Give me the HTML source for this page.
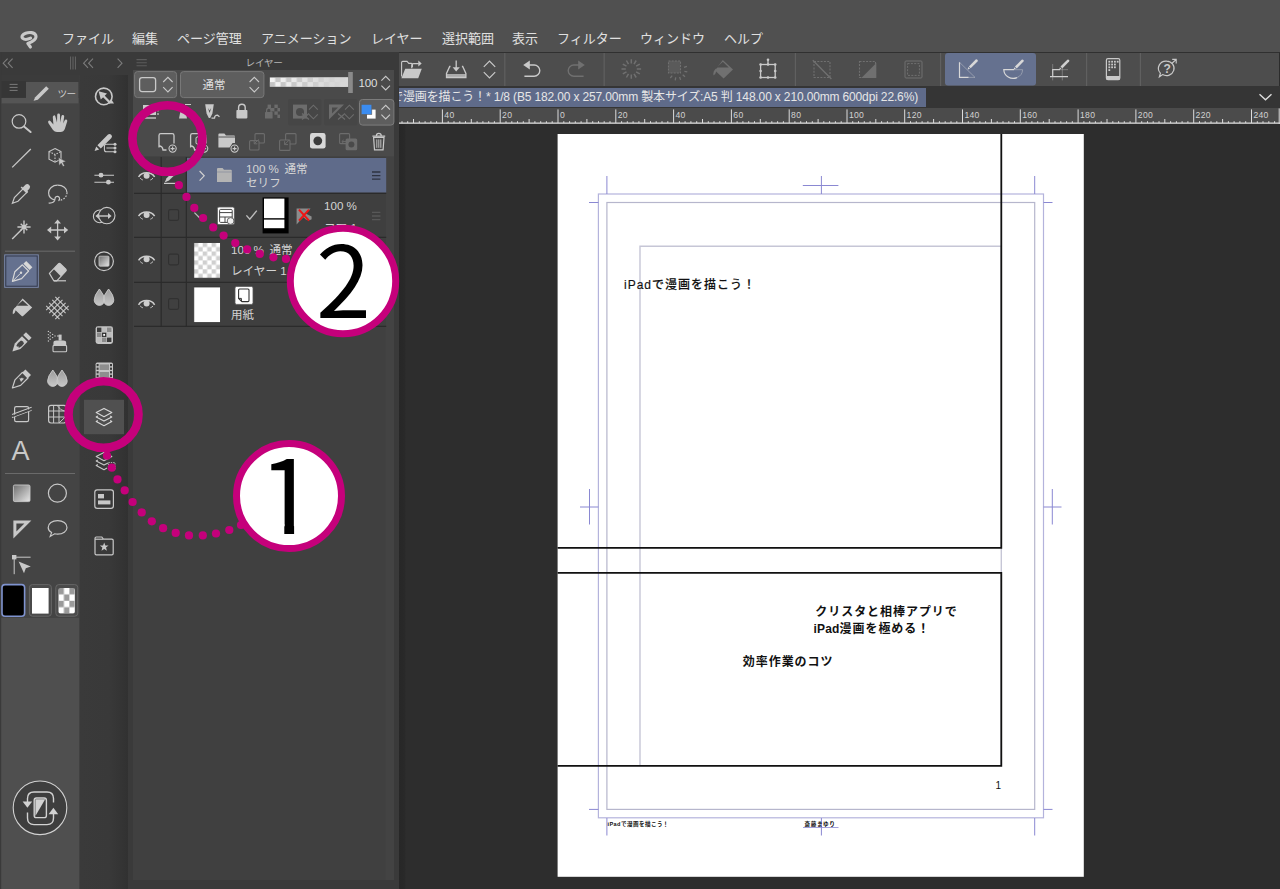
<!DOCTYPE html>
<html lang="ja">
<head>
<meta charset="utf-8">
<title>CLIP STUDIO PAINT</title>
<style>
*{box-sizing:border-box;margin:0;padding:0}
html,body{width:1280px;height:889px;overflow:hidden;background:#2e2e2e}
body{position:relative;font-family:"Liberation Sans","Noto Sans CJK JP",sans-serif;color:#d8d8d8;font-size:13px}
.abs{position:absolute}
svg{position:absolute;left:0;top:0;overflow:visible}
svg text{font-family:"Liberation Sans","Noto Sans CJK JP",sans-serif}
#menubar{left:0;top:0;width:1280px;height:52px;background:#505050}
#menubar span{position:absolute;top:29px;line-height:20px;font-size:13px;color:#e0e0e0;white-space:nowrap}
#toolpal{left:0;top:52px;width:79px;height:837px;background:#4b4b4b}
#quick{left:79px;top:52px;width:49px;height:837px;background:#393939}
#layerpanel{left:128px;top:52px;width:270px;height:837px;background:#393939}
#cmdbar{left:398.600px;top:52px;width:881.400px;height:34px;background:#4d4d4d;border-top:1.200px solid #303030;border-right:1.600px solid #2c2c2c}
#tabbar{left:398px;top:86px;width:882px;height:22px;background:#353535}
#ruler{left:399px;top:108px;width:881px;height:16px;background:#4b4b4b}
#canvas{left:399px;top:124px;width:881px;height:765px;background:#2d2d2d}
#tab{left:399px;top:88px;width:527px;height:19px;background:#5f6b8a;overflow:hidden}
#tab span{position:absolute;right:8px;top:0;line-height:19px;font-size:12px;color:#e6e6e6;white-space:nowrap;letter-spacing:-0.15px}

</style>
</head>
<body>
<div id="menubar" class="abs">
<span style="left:62px">ファイル</span>
<span style="left:132px">編集</span>
<span style="left:177px">ページ管理</span>
<span style="left:261px">アニメーション</span>
<span style="left:371px">レイヤー</span>
<span style="left:442px">選択範囲</span>
<span style="left:512px">表示</span>
<span style="left:557px">フィルター</span>
<span style="left:640px">ウィンドウ</span>
<span style="left:724px">ヘルプ</span>
<svg width="1280" height="52" viewBox="0 0 1280 52"><path d="M30.600 38.200C28 39.400 24.400 39.800 22.800 38.400C21 36.600 22.600 34.200 25.600 33.200C29.400 31.900 34.600 32.200 35.800 35.400C36.800 38.400 33.600 41.600 27.800 43.400L30.400 47" fill="none" stroke="#c9c9c9" stroke-width="3.100" stroke-linecap="round" stroke-linejoin="round"/></svg>
</div>
<div id="toolpal" class="abs"></div>
<div id="quick" class="abs"></div>
<svg id="toolsvg" width="1280" height="889" viewBox="0 0 1280 889">
<rect x="0" y="52" width="79.600" height="837" fill="#4f4f4f"/>
<rect x="0" y="52" width="79.600" height="566" fill="#444444"/>
<rect x="0" y="52" width="128" height="23" fill="#3a3a3a"/>
<rect x="0" y="75" width="79.600" height="28" fill="#3b3b3b"/>
<rect x="0" y="52" width="1.2" height="837" fill="#3a3a3a"/>

<g fill="none" stroke="#7c7c7c" stroke-width="1.1"><path d="M7.6 58.6l-4.4 4.6 4.4 4.6M12.6 58.6l-4.4 4.6 4.4 4.6"/><path d="M88 58.6l-4.4 4.6 4.4 4.6M93 58.6l-4.4 4.6 4.4 4.6"/><path d="M117.6 58.6l4.4 4.6-4.4 4.6"/></g>
<path d="M70.6 56.5v13M73 56.5v13M75.4 56.5v13" stroke="#666" stroke-width="1"/>
<rect x="1.5" y="81" width="24.5" height="16.5" fill="#363636"/>
<path d="M9.6 84.4h8M9.6 87.4h8M9.6 90.4h8" stroke="#7a7a7a" stroke-width="1"/>
<rect x="26" y="82" width="52.4" height="21" fill="#555"/>
<rect x="1.5" y="98" width="77" height="5.4" fill="#555"/>
<path d="M33.6 100.8l1.6-3.6 11-11 2.6 2.6-11 11z" fill="#c8c8c8"/>
<text x="57.4" y="97.4" font-size="9.6" fill="#d0d0d0" letter-spacing="-0.6">ツー</text>
<path d="M5 251.2H75M5 473.5H75" stroke="#6a6a6a" stroke-width="1"/>
<rect x="4.6" y="254.8" width="33.8" height="32.6" fill="#65718f" stroke="#7885a6" stroke-width="0.8"/><rect x="5.8" y="256" width="31.4" height="30.2" fill="none" stroke="#2f3445" stroke-width="0.9"/>
<circle cx="19" cy="121.4" r="6.8" fill="none" stroke="#c8c8c8" stroke-width="1.2"/><path d="M24 126.6l6.6 5.4" stroke="#c8c8c8" stroke-width="2" stroke-linecap="round"/>
<path d="M53.400 124.400L50.600 121.200Q49.400 120 48.400 121Q47.600 122 48.600 123.400L53 130Q54.600 132 57 132H60.600Q63.600 132 64.800 129L67.200 121.400Q67.600 120 66.400 119.600Q65.200 119.200 64.600 120.600L63.200 123.400L64.200 116.600Q64.400 115.200 63 115Q61.800 114.800 61.400 116.200L60.200 122.400L60 115Q60 113.600 58.600 113.600Q57.200 113.600 57.200 115L57 122.400L55.400 116.400Q55 115 53.800 115.400Q52.600 115.800 52.800 117.200Z" fill="#c8c8c8"/>
<path d="M12.2 167.4L30.8 149" stroke="#c8c8c8" stroke-width="1.3"/>
<g fill="none" stroke="#c8c8c8" stroke-width="1.1"><path d="M55 148.6l6 3v7.6l-6 3-6-3v-7.6z"/><path d="M49 151.6l6 3 6-3M55 154.6v7.6" stroke-dasharray="1.6 1.2"/></g><path d="M58.6 157.6l7.4 4-3.2 0.8 1.8 3.4-1.6 0.8-1.8-3.4-2.2 2.4z" fill="#c8c8c8" stroke="#444444" stroke-width="0.5"/>
<path d="M12.4 203.2l2-5.6 9.4-9.4 3.6 3.6-9.4 9.4z" fill="none" stroke="#c8c8c8" stroke-width="1.2"/><path d="M22.6 189.6l4 4 1.2-1.2-1-1 2.6-2.6q1.6-2-0.2-3.8t-3.8-0.2l-2.6 2.6-1-1-1.2 1.2z" fill="#c8c8c8"/>
<path d="M57.6 185.2c5.4 0 9.4 3.2 9.4 7.4" fill="none" stroke="#c8c8c8" stroke-width="1.2"/><path d="M67 192.6c0 4.2-3.6 7.6-8.4 8" fill="none" stroke="#c8c8c8" stroke-width="1.2" stroke-dasharray="1.6 1.4"/><path d="M57.6 185.2c-5.2 0-9 3.4-9 7.6 0 3.6 2.6 6.4 6.400 7.400 M58.6 200.600a2.300 2.300 0 1 0 -3.600 -1.800c0 2.600 -2 4.600 -6.400 4.200" fill="none" stroke="#c8c8c8" stroke-width="1.2"/>
<path d="M24 227L30.6 227.0M24 227L27.3 230.3M24 227L24.0 233.6M24 227L20.7 230.3M24 227L17.4 227.0M24 227L20.7 223.7M24 227L24.0 220.4M24 227L27.3 223.7" stroke="#c8c8c8" stroke-width="1.4"/><path d="M12.2 239l10-10" stroke="#c8c8c8" stroke-width="1.4"/><circle cx="24" cy="227" r="1.6" fill="#c8c8c8"/>
<path d="M57.6 221.6v16.800M49.2 230h16.800" stroke="#c8c8c8" stroke-width="1.3"/><path d="M57.6 219.4l3.4 4.200h-6.800zM57.6 240.600l3.400-4.200h-6.800zM47 230l4.200-3.400v6.800zM68.200 230l-4.200-3.400v6.800z" fill="#c8c8c8"/>
<path d="M12.400 281.400l2.400-9.600 7.600-7 6.200 6.200-7 7.600z" fill="none" stroke="#d8d8d8" stroke-width="1.200" stroke-linejoin="round"/><path d="M13 280.800l7.400-7.400" stroke="#d8d8d8" stroke-width="1"/><circle cx="21" cy="272.800" r="1.200" fill="#d8d8d8"/><path d="M23.400 263.800l2.800-2.800 6.200 6.200-2.800 2.800z" fill="#d8d8d8"/>
<path d="M49.400 273.400l9-9.600q1-1 2 0l5.400 5.400q1 1 0 2l-9 9.600h-3z" fill="none" stroke="#c8c8c8" stroke-width="1.200" stroke-linejoin="round"/><path d="M53.600 269l7.200 7.200 5-5.200q1-1 0-2l-5.400-5.200q-1-1-2 0z" fill="#c8c8c8"/><path d="M54 280.800h12" stroke="#c8c8c8" stroke-width="1.200"/>
<path d="M22.600 298.400l9.600 9-8.800 8.400q-1 1-2 0l-7.200-6.800z" fill="#c8c8c8"/><path d="M22.600 300.400l5.800 5.400h-11.600z" fill="#444444"/><path d="M15.600 307q-3.400 2.600-2.800 7.200 2.400-1 2.800-3.800z" fill="#c8c8c8"/>
<path d="M46.2 310.1L59.5 296.8M46.2 305.9L59.5 319.2M49.2 313.1L62.5 299.8M49.2 302.9L62.5 316.2M52.3 316.2L65.6 302.9M52.3 299.8L65.6 313.1M55.3 319.2L68.6 305.9M55.3 296.8L68.6 310.1" stroke="#c8c8c8" stroke-width="1.100" fill="none"/>
<path d="M12.400 351.400l2.400-8 7.200-7.200 5.600 5.600-7.200 7.200z" fill="#c8c8c8"/><path d="M16.400 345.600q1.600-3.400 4.600-5.200 2.600 0.600 3 3-1.800 3-5.200 4.600l-0.400-1.800-1.400 0.600z" fill="#444444"/><path d="M23.200 335l2.800-2.800 5.600 5.600-2.800 2.800z" fill="#c8c8c8"/>
<rect x="53" y="345.400" width="13.600" height="6.400" rx="1" fill="none" stroke="#c8c8c8" stroke-width="1.100"/><path d="M53.400 345v-2q0-2.400 3-2.400h6.800q3 0 3 2.400v2z" fill="#c8c8c8"/><rect x="58.600" y="334.600" width="3" height="6" fill="#c8c8c8"/><path d="M57 336h2" stroke="#c8c8c8" stroke-width="1"/>
<g fill="#c8c8c8"><circle cx="55" cy="336" r="0.700"/><circle cx="52.6" cy="334.4" r="0.700"/><circle cx="52.6" cy="337.6" r="0.700"/><circle cx="50.2" cy="332.8" r="0.700"/><circle cx="50.2" cy="336" r="0.700"/><circle cx="50.2" cy="339.2" r="0.700"/><circle cx="48.4" cy="331.4" r="0.700"/><circle cx="48.4" cy="334.6" r="0.700"/><circle cx="48.4" cy="337.8" r="0.700"/><circle cx="48.4" cy="341" r="0.700"/></g>
<path d="M12.400 388l2.600-8.200 7.400-7.400 5.600 5.600-7.400 7.400z" fill="none" stroke="#c8c8c8" stroke-width="1.200" stroke-linejoin="round"/><path d="M22.400 372.400l3-3 5.600 5.600-3 3z" fill="#c8c8c8"/><path d="M19 377.400q1.400 2 3 0 1.400 2 2.600 0.600l-3.600 4z" fill="#c8c8c8"/>
<defs><linearGradient id="gd" x1="0" y1="0" x2="0" y2="1"><stop offset="0" stop-color="#9a9a9a"/><stop offset="1" stop-color="#c8c8c8"/></linearGradient><linearGradient id="gs" x1="0" y1="0" x2="1" y2="1"><stop offset="0" stop-color="#6e6e6e"/><stop offset="1" stop-color="#e6e6e6"/></linearGradient></defs>
<path d="M52.800 370q5.200 6.400 5.200 11a5.200 5.400 0 0 1-10.400 0q0-4.600 5.200-11zM62 370q5.200 6.400 5.200 11a5.200 5.400 0 0 1-10.400 0q0-4.600 5.200-11z" fill="url(#gd)" stroke="#c8c8c8" stroke-width="0.900"/>
<rect x="14.600" y="406.600" width="14" height="15" rx="1.600" fill="none" stroke="#c8c8c8" stroke-width="1.200"/><path d="M12 417.600l19.600-7.400M12 414.600l19.600-7.400" stroke="#c8c8c8" stroke-width="1.100"/><path d="M12.600 416.200l18.600-7" stroke="#444444" stroke-width="1.600"/>
<rect x="48.600" y="405.400" width="17.600" height="17.600" rx="2.400" fill="none" stroke="#c8c8c8" stroke-width="1.200"/><path d="M53.600 405.400v17.600M59 405.400v17.600M48.600 411h17.600M48.600 417h17.600M57 405.400q3 5 9.200 6.400M59 423l7.200-7" fill="none" stroke="#c8c8c8" stroke-width="1"/>
<text x="11.600" y="460" font-size="27" fill="#c8c8c8">A</text>
<rect x="13.400" y="485" width="16.600" height="16.600" rx="1.400" fill="url(#gs)" stroke="#c8c8c8" stroke-width="0.900"/>
<circle cx="57.400" cy="493.200" r="9" fill="none" stroke="#c8c8c8" stroke-width="1.200"/>
<path d="M13.400 520.400h18l-18 18z" fill="#c8c8c8"/><path d="M16.400 523.400h8l-8 8z" fill="#444444"/>
<path d="M57.600 520.600c5.400 0 9.400 3 9.400 6.800s-4 6.800-9.400 6.800c-1 0-2-0.100-3-0.400l-4.400 2.600 1.400-3.800c-2-1.200-3.400-3-3.400-5.200 0-3.800 4-6.800 9.400-6.800z" fill="none" stroke="#c8c8c8" stroke-width="1.200"/>
<rect x="12" y="555" width="4.400" height="4.400" fill="#c8c8c8"/><path d="M14.200 557.200h16.400M14.200 557.200v17" stroke="#c8c8c8" stroke-width="1"/><path d="M18.600 561.600l12.200 4.800-5 1.800-1.800 5z" fill="#c8c8c8"/>
<rect x="2" y="584.600" width="22.600" height="31.600" rx="3" fill="#000" stroke="#7f93cf" stroke-width="1.600"/>
<rect x="29.400" y="584.600" width="22" height="31.600" rx="3" fill="#4a4a4a" stroke="#666" stroke-width="1"/><rect x="32" y="588" width="16.600" height="25.600" fill="#fff"/>
<defs><pattern id="chk3" x="58.400" y="588" width="11" height="12.800" patternUnits="userSpaceOnUse"><rect width="11" height="12.800" fill="#fff"/><rect width="5.500" height="6.400" fill="#9a9a9a"/><rect x="5.500" y="6.400" width="5.500" height="6.400" fill="#9a9a9a"/></pattern></defs>
<rect x="55.800" y="584.600" width="22" height="31.600" rx="3" fill="#4a4a4a" stroke="#666" stroke-width="1"/><rect x="58.400" y="588" width="16.600" height="25.600" rx="2" fill="url(#chk3)"/>
<circle cx="40" cy="807.800" r="26.800" fill="#3e3e3e" stroke="#d2d2d2" stroke-width="1.100"/>
<rect x="34.200" y="798" width="12.200" height="19.600" rx="2.200" fill="none" stroke="#d2d2d2" stroke-width="1.400"/><path d="M35.400 816v-16.800h9.800z" fill="#d2d2d2"/>
<path d="M27.500 802V798.600Q27.500 792 34 792H47Q53.500 792 53.500 798.600V802.400" fill="none" stroke="#d2d2d2" stroke-width="1.400"/><path d="M22.600 801.400h9.600l-4.800 6.400z" fill="#d2d2d2"/>
<path d="M53.500 813.600V818Q53.500 824.600 47 824.600H34Q27.500 824.600 27.500 818V812.600" fill="none" stroke="#d2d2d2" stroke-width="1.400"/><path d="M58.200 814.200h-9.600l4.800-6.400z" fill="#d2d2d2"/>
<defs><linearGradient id="qg" x1="0" x2="1"><stop offset="0" stop-color="#3a3a3a"/><stop offset="0.600" stop-color="#393939"/><stop offset="1" stop-color="#313131"/></linearGradient></defs><rect x="79.600" y="75" width="48.600" height="814" fill="url(#qg)"/>
<circle cx="103.800" cy="96.400" r="8.300" fill="none" stroke="#c8c8c8" stroke-width="1.600"/><path d="M98.600 91.200l8.400 2.200-6.200 6.200z" fill="#c8c8c8"/><path d="M102.800 95.400l7.600 7.600" stroke="#c8c8c8" stroke-width="2.200"/><path d="M107.800 103.600h6.200l-2.800-4.400z" fill="#c8c8c8"/>
<path d="M94.600 151l1.600-4.600 3 3zM97.400 145.200l10.600-10.600q1.600-1.400 3.200 0.200t0.200 3.200l-10.600 10.600z" fill="#c8c8c8"/>
<path d="M106.400 144.200h8.400M106.400 148h8.400M106.400 151.800h8.400M106.400 144.200q-2 0-2 2v3.600q0 2 2 2" fill="none" stroke="#c8c8c8" stroke-width="1.100"/><circle cx="115" cy="144.200" r="1.500" fill="#c8c8c8"/><circle cx="115" cy="148" r="1.500" fill="#c8c8c8"/><circle cx="115" cy="151.800" r="1.500" fill="#c8c8c8"/>
<path d="M94.400 175.200h19.600M94.400 182.200h19.600" stroke="#c8c8c8" stroke-width="1.100"/><circle cx="101" cy="175.200" r="2.400" fill="#c8c8c8"/><circle cx="108.400" cy="182.200" r="2.400" fill="#c8c8c8"/>
<circle cx="99.800" cy="216.400" r="6.400" fill="none" stroke="#c8c8c8" stroke-width="1.100"/><circle cx="106.800" cy="215.600" r="8.200" fill="#3a3a3a" stroke="#c8c8c8" stroke-width="1.100"/><path d="M98 216h11" stroke="#c8c8c8" stroke-width="1.400"/><path d="M95.400 216l3.600-3v6zM111.600 216l-3.600-3v6z" fill="#c8c8c8"/>
<circle cx="104" cy="261.200" r="9.400" fill="none" stroke="#c8c8c8" stroke-width="1.200"/><rect x="99" y="256.200" width="10" height="10" rx="1" fill="url(#gs)" stroke="#c8c8c8" stroke-width="0.800"/>
<path d="M99.400 289q5.200 6.400 5.200 11a5.200 5.400 0 0 1-10.400 0q0-4.600 5.200-11zM108.600 289q5.200 6.400 5.200 11a5.200 5.400 0 0 1-10.400 0q0-4.600 5.200-11z" fill="url(#gd)" stroke="#c8c8c8" stroke-width="0.900"/>
<rect x="95.600" y="326.200" width="17.400" height="17.800" rx="2.400" fill="#c4c4c4"/>
<rect x="97.0" y="327.6" width="4.400" height="4.400" fill="#3c3c3c"/><rect x="102.0" y="327.6" width="4.400" height="4.400" fill="#bdbdbd"/><rect x="107.0" y="327.6" width="4.400" height="4.400" fill="#8a8a8a"/><rect x="97.0" y="332.6" width="4.400" height="4.400" fill="#8a8a8a"/><rect x="102.0" y="332.6" width="4.400" height="4.400" fill="#3c3c3c"/><rect x="107.0" y="332.6" width="4.400" height="4.400" fill="#bdbdbd"/><rect x="97.0" y="337.6" width="4.400" height="4.400" fill="#bdbdbd"/><rect x="102.0" y="337.6" width="4.400" height="4.400" fill="#8a8a8a"/><rect x="107.0" y="337.6" width="4.400" height="4.400" fill="#3c3c3c"/>
<rect x="102.800" y="333.400" width="2.800" height="2.800" fill="#fff" stroke="#222" stroke-width="0.800"/>
<rect x="95.600" y="362.600" width="17.400" height="17" rx="1.600" fill="#c4c4c4"/><rect x="99.600" y="364.400" width="9.400" height="5.600" fill="#8e8e8e"/><rect x="99.600" y="372" width="9.400" height="5.600" fill="#8e8e8e"/>
<g fill="#3a3a3a"><rect x="96.6" y="364.0" width="2" height="2.200"/><rect x="96.6" y="367.6" width="2" height="2.200"/><rect x="96.6" y="371.2" width="2" height="2.200"/><rect x="96.6" y="374.8" width="2" height="2.200"/><rect x="96.6" y="378.4" width="2" height="2.200"/><rect x="110" y="364.0" width="2" height="2.200"/><rect x="110" y="367.6" width="2" height="2.200"/><rect x="110" y="371.2" width="2" height="2.200"/><rect x="110" y="374.8" width="2" height="2.200"/><rect x="110" y="378.4" width="2" height="2.200"/></g>
<rect x="84" y="399.800" width="40" height="34.400" fill="#505050"/>
<g fill="none" stroke="#d8d8d8" stroke-width="1.100" stroke-linejoin="round"><path d="M104 408.400l7.800 4.200-7.800 4.200-7.800-4.200z"/><path d="M97.800 416l-1.600 0.900 7.800 4.200 7.800-4.200-1.600-0.900"/><path d="M97.800 420.600l-1.600 0.900 7.800 4.200 7.800-4.200-1.600-0.900"/></g>
<g fill="none" stroke="#c8c8c8" stroke-width="1.100" stroke-linejoin="round"><path d="M104 452.400l7.800 4.200-7.800 4.200-7.800-4.200z"/><path d="M97.800 460l-1.600 0.900 7.800 4.200 4-2"/><path d="M97.800 464.600l-1.600 0.900 7.800 4.200 3-1.600"/></g><rect x="108.400" y="462.600" width="6.600" height="6.600" fill="none" stroke="#c8c8c8" stroke-width="0.900" stroke-dasharray="1.400 1"/>
<rect x="94.800" y="489.800" width="18.600" height="18.600" rx="2.400" fill="none" stroke="#c8c8c8" stroke-width="1.200"/><rect x="98" y="494" width="6" height="4.400" fill="#c8c8c8"/><rect x="98" y="500.400" width="12.400" height="4" fill="#c8c8c8"/>
<path d="M95 553.400v-15q0-1.400 1.400-1.400h5.400l1.600 2.200h8.400q1.400 0 1.400 1.400v12.800q0 1.400-1.400 1.400h-15.400q-1.400 0-1.400-1.400z" fill="none" stroke="#c8c8c8" stroke-width="1.200"/><path d="M95 539.200h8" stroke="#c8c8c8" stroke-width="1.200"/>
<path d="M104.20 542.40L105.32 545.46L108.57 545.58L106.01 547.59L106.90 550.72L104.20 548.90L101.50 550.72L102.39 547.59L99.83 545.58L103.08 545.46z" fill="#c8c8c8"/>
</svg>
<div id="layerpanel" class="abs"></div>
<svg id="layersvg" width="1280" height="889" viewBox="0 0 1280 889">
<rect x="128" y="52" width="270" height="837" fill="#3a3a3a"/>
<rect x="394" y="52" width="5" height="837" fill="#3a3a3a"/>
<rect x="133" y="70" width="261" height="810" fill="#434343"/>
<rect x="133" y="70" width="252.400" height="810" fill="#404040"/>
<rect x="133" y="70" width="261" height="86.400" fill="#4a4a4a"/>
<path d="M136.5 59.6h10.3M136.5 62.7h10.3M136.5 65.7h10.3" stroke="#5c5c5c" stroke-width="1.1"/>
<text x="245.6" y="65.6" font-size="9.6" fill="#b6b6b6" letter-spacing="-0.3">レイヤー</text>
<rect x="134.6" y="71.6" width="42" height="26" rx="3" fill="#5e5e5e" stroke="#787878" stroke-width="1"/>
<rect x="139.6" y="77.6" width="16" height="14" rx="2.5" fill="none" stroke="#c9c9c9" stroke-width="1.3"/>
<path d="M163.2 82l4.7-4.7 4.7 4.7M163.2 87.2l4.7 4.7 4.7-4.7" fill="none" stroke="#c9c9c9" stroke-width="1.1"/>
<rect x="180.5" y="71.6" width="83.4" height="26" rx="3" fill="#5e5e5e" stroke="#787878" stroke-width="1"/>
<text x="202.6" y="89" font-size="11.4" fill="#dedede">通常</text>
<path d="M249.6 82l4.7-4.7 4.7 4.7M249.6 87.2l4.7 4.7 4.7-4.7" fill="none" stroke="#c9c9c9" stroke-width="1.1"/>
<defs><pattern id="chk" x="269.8" y="77.4" width="10.8" height="9.4" patternUnits="userSpaceOnUse"><rect width="10.8" height="9.4" fill="#c4c4c4"/><rect width="5.4" height="4.7" fill="#f4f4f4"/><rect x="5.4" y="4.7" width="5.4" height="4.7" fill="#f4f4f4"/></pattern>
<linearGradient id="opg" x1="0" x2="1"><stop offset="0" stop-color="#d4d4d4" stop-opacity="0"/><stop offset="0.75" stop-color="#d4d4d4" stop-opacity="0.85"/><stop offset="1" stop-color="#d8d8d8" stop-opacity="1"/></linearGradient></defs>
<rect x="269.8" y="77.4" width="78.4" height="9.4" fill="url(#chk)"/><rect x="269.8" y="77.4" width="78.4" height="9.4" fill="url(#opg)"/>
<rect x="348.2" y="72" width="4.6" height="21" fill="#8a8a8a"/>
<text x="358.6" y="87" font-size="11.6" fill="#dedede" letter-spacing="-0.2">100</text>
<path d="M381.4 80.6l4.3-4.3 4.3 4.3M381.4 85.6l4.3 4.3 4.3-4.3" fill="none" stroke="#c9c9c9" stroke-width="1.1"/>
<rect x="143" y="105" width="13" height="10" fill="#c9c9c9"/><path d="M143 118h13" stroke="#c9c9c9" stroke-width="1.4"/><path d="M158 106v9" stroke="#c9c9c9" stroke-width="1.2" stroke-dasharray="2 1.5"/>
<path d="M179 118.5l2.2-11h3.6l2.2 11z" fill="#c9c9c9"/><path d="M174 104.5h7M185 104.5h6" stroke="#c9c9c9" stroke-width="1.2"/>
<path d="M205.2 104.2h8.6l-1.4 9.2-2.2 4.6h-1.4l-2.2-4.6z" fill="#c9c9c9"/><path d="M208 108l1.6 2.4 1.6-2.4-1.6 5z" fill="#4a4a4a"/><path d="M211.5 118.2h3q0-3 3-3l2 1.6" fill="none" stroke="#c9c9c9" stroke-width="1.2"/>
<rect x="236.4" y="110" width="11" height="8.4" rx="0.8" fill="#c9c9c9"/><path d="M238.6 110v-2.4a3.3 3.3 0 0 1 6.6 0v2.4" fill="none" stroke="#c9c9c9" stroke-width="1.4"/>
<g fill="#6c6c6c"><rect x="265" y="112" width="7.6" height="6.6" rx="0.6"/><rect x="267.6" y="104.6" width="3.4" height="3.4"/><rect x="274.4" y="104.6" width="3.4" height="3.4"/><rect x="271" y="108" width="3.4" height="3.4"/><rect x="277.4" y="108" width="2.6" height="3.4"/><rect x="274.4" y="111.4" width="3.4" height="3.4"/><rect x="277.4" y="114.6" width="2.6" height="3.4"/></g><path d="M266.6 112v-1.6a2.2 2.2 0 0 1 4.4 0v1.6" fill="none" stroke="#6c6c6c" stroke-width="1.2"/>
<rect x="288" y="99" width="33.4" height="26.4" rx="2" fill="#464646"/>
<rect x="293" y="104.6" width="14" height="14" fill="#6c6c6c"/><circle cx="300" cy="112" r="4" fill="#4a4a4a"/><path d="M302 113.5l7 6M309 113.5l-7 6" stroke="#6c6c6c" stroke-width="1.2"/><path d="M309 109.6l4.4-4.4 4.4 4.4M309 114.4l4.4 4.4 4.4-4.4" fill="none" stroke="#6c6c6c" stroke-width="1.1"/>
<rect x="324" y="99" width="33.4" height="26.4" rx="2" fill="#464646"/>
<path d="M329 104.6h15l-15 15z" fill="#6c6c6c"/><path d="M332 107.6h6l-6 6z" fill="#4a4a4a"/><path d="M338 113.5l7 6M345 113.5l-7 6" stroke="#6c6c6c" stroke-width="1.2"/><path d="M345 109.6l4.4-4.4 4.4 4.4M345 114.4l4.4 4.4 4.4-4.4" fill="none" stroke="#6c6c6c" stroke-width="1.1"/>
<rect x="359.5" y="99.5" width="34.4" height="25.6" rx="3" fill="#5e5e5e" stroke="#7c7c7c" stroke-width="1"/>
<rect x="367" y="109.6" width="8.6" height="9" fill="#fff"/><rect x="361.2" y="104.4" width="10.6" height="10" fill="#3b8cf0" stroke="#5e5e5e" stroke-width="0.6"/>
<path d="M381.4 109.6l4.3-4.3 4.3 4.3M381.4 114.6l4.3 4.3 4.3-4.3" fill="none" stroke="#c9c9c9" stroke-width="1.1"/>
<path d="M159 147.6v-12.2q0-1.8 1.8-1.8h11.4q1.8 0 1.8 1.8v8" fill="none" stroke="#c9c9c9" stroke-width="1.3"/><path d="M159 146q3.6 0 4 4h3.5" fill="none" stroke="#c9c9c9" stroke-width="1.3"/><circle cx="172.6" cy="148.6" r="3.6" fill="#4a4a4a" stroke="#c9c9c9" stroke-width="1.1"/><path d="M170.6 148.6h4M172.6 146.6v4" stroke="#c9c9c9" stroke-width="1.1"/>
<path d="M190.6 147.6v-12.2q0-1.8 1.8-1.8h11.4q1.8 0 1.8 1.8v8" fill="none" stroke="#c9c9c9" stroke-width="1.3"/><path d="M190.6 146q3.6 0 4 4h3.5" fill="none" stroke="#c9c9c9" stroke-width="1.3"/><path d="M196 137.6l5-2.4 5 2.4v5.8l-5 2.4-5-2.4z" fill="none" stroke="#c9c9c9" stroke-width="1"/><circle cx="204.2" cy="148.6" r="3.6" fill="#4a4a4a" stroke="#c9c9c9" stroke-width="1.1"/><path d="M202.2 148.6h4M204.2 146.6v4" stroke="#c9c9c9" stroke-width="1.1"/>
<path d="M218.4 147.6v-13.2q0-1 1-1h5l1.6 2h8q1 0 1 1v6.6h-2.4l-3 4.6z" fill="#c9c9c9"/><path d="M218.4 137h16.6" stroke="#4a4a4a" stroke-width="0.9"/><circle cx="234.6" cy="148.6" r="3.6" fill="#4a4a4a" stroke="#c9c9c9" stroke-width="1.1"/><path d="M232.6 148.6h4M234.6 146.6v4" stroke="#c9c9c9" stroke-width="1.1"/>
<g fill="none" stroke="#6c6c6c" stroke-width="1.1"><rect x="255" y="133.6" width="9.4" height="9.4" rx="1"/><rect x="249.6" y="140.6" width="9.4" height="9.4" rx="1" fill="#4a4a4a"/></g><path d="M258.6 139.4l-4.4 4.4M254.2 140.6v3.2h3.2" stroke="#6c6c6c" stroke-width="1" fill="none"/>
<g fill="none" stroke="#6c6c6c" stroke-width="1.1"><rect x="285.6" y="133.6" width="10.4" height="10.4" rx="1"/><rect x="279.6" y="140" width="10.4" height="10.4" rx="1" fill="#4a4a4a"/></g><path d="M289.4 139.8l-4.8 4.8M284.6 141.2v3.4h3.4" stroke="#6c6c6c" stroke-width="1" fill="none"/>
<rect x="310" y="133" width="15.6" height="15.6" rx="2.4" fill="#d8d8d8"/><circle cx="317.8" cy="140.8" r="4.4" fill="#3c3c3c"/>
<g fill="none" stroke="#6c6c6c" stroke-width="1.1"><rect x="339.6" y="133.6" width="10" height="10" rx="1"/></g><rect x="345.6" y="138.6" width="11.6" height="11.6" rx="1.5" fill="#6c6c6c"/><circle cx="351.4" cy="144.4" r="3" fill="#4a4a4a"/><path d="M346.6 141.6h-4.4M343.6 140l-1.8 1.6 1.8 1.6" stroke="#6c6c6c" stroke-width="1" fill="none"/>
<path d="M373.6 137.4h10.4l-0.9 12.4h-8.6z" fill="none" stroke="#c9c9c9" stroke-width="1.2"/><path d="M372.4 136.2h12.8M376.4 135.6q0-2.2 2.4-2.2t2.4 2.2" fill="none" stroke="#c9c9c9" stroke-width="1.2"/><path d="M376.8 139.4v8.4M378.8 139.4v8.4M380.8 139.4v8.4" stroke="#c9c9c9" stroke-width="0.9"/>
<rect x="134" y="157" width="252" height="169.5" fill="#3f3f3f"/>
<rect x="186.800" y="158" width="199.400" height="34.600" fill="#5f6b8a"/>
<g stroke="#2b2b2b" stroke-width="1.2" fill="none">
<path d="M134 193.3H386.2"/>
<path d="M134 237.3H386.2"/>
<path d="M134 282.3H386.2"/>
<path d="M134 326.3H386.2"/>
<path d="M161.2 157V326.5M186.3 157V326.5"/>
</g>
<path d="M138.6 177.0c3-5.600 13-5.600 16 0" fill="none" stroke="#cdcdcd" stroke-width="1.500"/><path d="M140.2 178.2q1.400 1.400 2.600 1.800M153.0 178.2q-1.400 1.400-2.600 1.800" fill="none" stroke="#cdcdcd" stroke-width="1"/><circle cx="146.6" cy="175.8" r="3" fill="#cdcdcd"/>
<path d="M138.6 216.2c3-5.600 13-5.600 16 0" fill="none" stroke="#cdcdcd" stroke-width="1.500"/><path d="M140.2 217.4q1.400 1.400 2.600 1.800M153.0 217.4q-1.400 1.400-2.600 1.800" fill="none" stroke="#cdcdcd" stroke-width="1"/><circle cx="146.6" cy="215.0" r="3" fill="#cdcdcd"/>
<path d="M138.6 260.4c3-5.600 13-5.600 16 0" fill="none" stroke="#cdcdcd" stroke-width="1.500"/><path d="M140.2 261.6q1.400 1.400 2.600 1.800M153.0 261.6q-1.400 1.400-2.600 1.800" fill="none" stroke="#cdcdcd" stroke-width="1"/><circle cx="146.6" cy="259.2" r="3" fill="#cdcdcd"/>
<path d="M138.6 304.8c3-5.600 13-5.600 16 0" fill="none" stroke="#cdcdcd" stroke-width="1.500"/><path d="M140.2 306.0q1.400 1.400 2.600 1.800M153.0 306.0q-1.400 1.400-2.600 1.800" fill="none" stroke="#cdcdcd" stroke-width="1"/><circle cx="146.6" cy="303.6" r="3" fill="#cdcdcd"/>
<path d="M164.6 182.6l2-4.4 6.4-6.4 2.4 2.4-6.4 6.4z" fill="#c9c9c9"/><path d="M164 183.4h12" stroke="#c9c9c9" stroke-width="1.2"/>
<rect x="168.6" y="209.6" width="10" height="10.8" rx="1.6" fill="#404040" stroke="#313131" stroke-width="1.100"/>
<rect x="168.6" y="254.1" width="10" height="10.8" rx="1.6" fill="#404040" stroke="#313131" stroke-width="1.100"/>
<rect x="168.6" y="298.6" width="10" height="10.8" rx="1.6" fill="#404040" stroke="#313131" stroke-width="1.100"/>
<path d="M199.6 171l4.6 4.8-4.6 4.8" fill="none" stroke="#d0d0d0" stroke-width="1.2"/>
<path d="M217 182v-13q0-1 1-1h4.6l1.4 1.8h6.8q1 0 1 1v11.2z" fill="#b4b4b4"/><path d="M217 172h14.8" stroke="#8a8fa0" stroke-width="0.8"/>
<text x="246" y="172.8" font-size="11.6" fill="#d4d4d4">100 %<tspan dx="5.500">通常</tspan></text>
<text x="246" y="187.4" font-size="11.6" fill="#d4d4d4">セリフ</text>
<path d="M372 172h8.4M372 175.6h8.4M372 179.2h8.4" stroke="#2e3342" stroke-width="1.3"/>
<path d="M194.4 212.6l5.4 5.4" fill="none" stroke="#bdbdbd" stroke-width="1.2"/>
<rect x="217.4" y="207" width="17" height="17.6" rx="1.5" fill="#fff" stroke="#555" stroke-width="0.8"/><g fill="none" stroke="#444" stroke-width="1"><rect x="219.6" y="209.4" width="12.6" height="13" rx="1"/><path d="M219.6 212.6h12.6M219.6 217h12.6M225 217v5.4M225 212.6"/></g><circle cx="230.6" cy="221" r="3.4" fill="#eee" stroke="#555" stroke-width="0.9"/>
<path d="M246.4 215.4l3.4 3.8 7-8.6" fill="none" stroke="#bdbdbd" stroke-width="1.4"/>
<rect x="262.6" y="197.4" width="26" height="36" fill="#000"/><rect x="264" y="198.6" width="20.4" height="19.6" fill="#fff"/><rect x="264" y="219.6" width="20.4" height="8.6" fill="#fff"/>
<path d="M296.6 208.6h14l-5 5 6 3v2.6q-3 2-6 0l-2-2-3.4 3.4-3.6 4z" fill="#8c8c8c"/><path d="M299 209.6l10 11M309 209.6l-10 11" stroke="#f01414" stroke-width="2"/>
<text x="324" y="210" font-size="11.6" fill="#d4d4d4">100 %</text>
<text x="324" y="232" font-size="11.6" fill="#d4d4d4">コマ 1</text>
<path d="M372 212.4h8.4M372 216h8.4M372 219.6h8.4" stroke="#585858" stroke-width="1.3"/>
<defs><pattern id="chk2" x="193.8" y="242.6" width="8.9" height="8.9" patternUnits="userSpaceOnUse"><rect width="8.9" height="8.9" fill="#fff"/><rect width="4.45" height="4.45" fill="#cfcfcf"/><rect x="4.45" y="4.45" width="4.45" height="4.45" fill="#cfcfcf"/></pattern></defs>
<rect x="193.8" y="242.6" width="26.6" height="35.6" fill="url(#chk2)" stroke="#333" stroke-width="0.8"/>
<text x="231" y="254.4" font-size="11.6" fill="#d4d4d4">100 %<tspan dx="5.500">通常</tspan></text>
<text x="231" y="275" font-size="11.6" fill="#d4d4d4">レイヤー 1</text>
<rect x="193.8" y="287" width="26.6" height="35.6" fill="#fff" stroke="#333" stroke-width="0.8"/>
<rect x="235" y="286.4" width="18" height="18" rx="1.6" fill="#fff" stroke="#555" stroke-width="0.8"/><path d="M238.6 298.4v-8.4q0-1 1-1h8.4q1 0 1 1v10.6q0 1-1 1h-6z" fill="none" stroke="#333" stroke-width="1.1"/><path d="M238.6 298.4h2.8v3" fill="none" stroke="#333" stroke-width="1"/>
<text x="231" y="319.4" font-size="11.4" fill="#d4d4d4">用紙</text>
</svg>
<div id="cmdbar" class="abs"></div>
<div id="tabbar" class="abs"></div>
<div id="tab" class="abs"><span>iPadで漫画を描こう！* 1/8 (B5 182.00 x 257.00mm 製本サイズ:A5 判 148.00 x 210.00mm 600dpi 22.6%)</span></div>
<div id="ruler" class="abs"></div>
<svg id="cmdsvg" width="1280" height="889" viewBox="0 0 1280 889">
<g stroke="#606060" stroke-width="1.2" fill="none">
<path d="M504.8 53V86"/>
<path d="M604.2 53V86"/>
<path d="M795.4 53V86"/>
<path d="M940.6 53V86"/>
<path d="M1086.6 53V86"/>
<path d="M1140.4 53V86"/>
</g>
<rect x="945" y="53" width="91" height="32.5" rx="3" fill="#65718f"/>
<path d="M401.600 76.500V62.600q0-1.200 1.200-1.200h4.200l1.800 2h2.600q1 0 1 1v2.600" fill="none" stroke="#c9c9c9" stroke-width="1.100"/><path d="M401.400 78.300l3.800-9.600h16.600l-3.600 9.600z" fill="#c9c9c9"/>
<path d="M411.8 68.2v-2.6q0-2 2-2h5" fill="none" stroke="#c9c9c9" stroke-width="1.3"/><path d="M418.3 60.6l3.4 3-3.4 3z" fill="#c9c9c9"/>
<g fill="none" stroke="#c9c9c9" stroke-width="1.3"><path d="M450.5 66.5h-0.8l-3.2 7v4h19.4v-4l-3.2-7h-0.8"/><path d="M456.2 60.5v8.5"/></g><path d="M452.6 67.2h7.2l-3.6 4.2z" fill="#c9c9c9"/><rect x="446.5" y="74" width="19.4" height="3.5" fill="#c9c9c9" opacity=".75"/>
<g fill="none" stroke="#c9c9c9" stroke-width="1.2"><path d="M483.8 66.8l5.7-5.7 5.7 5.7M483.8 72.2l5.7 5.7 5.7-5.7"/></g>
<g fill="none" stroke="#c9c9c9" stroke-width="1.4"><path d="M529 65h5.2a5.6 5.6 0 0 1 0 11.2h-9.8"/></g><path d="M523.2 65l6.6-4.6v9.2z" fill="#c9c9c9"/>
<g fill="none" stroke="#707070" stroke-width="1.4"><path d="M579 65h-5.2a5.6 5.6 0 0 0 0 11.2h9.8"/></g><path d="M584.8 65l-6.6-4.6v9.2z" fill="#707070"/>
<path d="M636.8 69.0L641.1 69.0M636.1 71.8L639.8 73.9M634.0 73.8L636.2 77.5M631.3 74.5L631.3 78.8M628.5 73.8L626.4 77.5M626.5 71.8L622.8 73.9M625.8 69.0L621.5 69.0M626.5 66.2L622.8 64.1M628.5 64.2L626.4 60.5M631.3 63.5L631.3 59.2M634.0 64.2L636.2 60.5M636.1 66.2L639.8 64.1" stroke="#707070" stroke-width="1.5" fill="none"/>
<rect x="668.5" y="61" width="12" height="12" fill="#5a5a5a" stroke="#707070" stroke-width="1.1" stroke-dasharray="2 1.2"/>
<path d="M684.0 67.4L686.9 66.4M684.4 71.3L687.3 71.8M682.7 74.8L685.0 76.7M679.6 77.0L680.6 79.9M675.7 77.4L675.2 80.3M672.2 75.7L670.3 78.0" stroke="#707070" stroke-width="1.3" fill="none"/>
<path d="M722.8 60l10.2 9.5-9.4 9-8.6-8z" fill="#707070"/><path d="M722.8 61.8l6 5.6h-12z" fill="#4c4c4c"/><path d="M716 68.5q-3.2 2.6-2.6 7 2.2-1 2.6-3.6z" fill="#707070"/>
<rect x="760.6" y="64.5" width="14.6" height="13" fill="none" stroke="#c9c9c9" stroke-width="1.3"/><path d="M768 59.5v5" stroke="#c9c9c9" stroke-width="1.3"/>
<g fill="#c9c9c9"><circle cx="768" cy="59.8" r="1.3"/><circle cx="760.6" cy="64.5" r="1.3"/><circle cx="768" cy="64.5" r="1.3"/><circle cx="775.2" cy="64.5" r="1.3"/><circle cx="760.6" cy="71" r="1.3"/><circle cx="775.2" cy="71" r="1.3"/><circle cx="760.6" cy="77.5" r="1.3"/><circle cx="768" cy="77.5" r="1.3"/><circle cx="775.2" cy="77.5" r="1.3"/></g>
<rect x="814" y="61.5" width="16" height="16" fill="none" stroke="#707070" stroke-width="1.1" stroke-dasharray="2 1.3"/><path d="M812.8 60.3l18.6 18.6" stroke="#707070" stroke-width="1.4"/>
<rect x="859.5" y="61.5" width="16" height="16" fill="none" stroke="#707070" stroke-width="1.1" stroke-dasharray="2 1.3"/><path d="M876.3 63v15h-15z" fill="#707070"/>
<rect x="905" y="61" width="17" height="17" rx="1" fill="none" stroke="#707070" stroke-width="1"/><rect x="907.6" y="63.6" width="11.8" height="11.8" fill="none" stroke="#707070" stroke-width="1" stroke-dasharray="2 1.3"/>
<path d="M959.500 62.300V77.400H968.600" fill="none" stroke="#d8d8d8" stroke-width="1.200"/><path d="M968.600 77.400H975M959.500 62.300L975 77.400" fill="none" stroke="#d8d8d8" stroke-width="0.900" opacity="0.450"/><path d="M967.6 69.4l0.700-2.400 1.700 1.700z" fill="#d8d8d8"/><path d="M968.9 66.4l6.800-6.800q0.900-0.700 1.700 0.100t0.100 1.700l-6.800 6.800z" fill="#d8d8d8"/>
<path d="M1014 69.700H1003.800A9.400 9 0 0 0 1017 77.600" fill="none" stroke="#d8d8d8" stroke-width="1.200"/><path d="M1014 69.700H1022.600A9.400 9 0 0 1 1017 77.600" fill="none" stroke="#d8d8d8" stroke-width="0.900" opacity="0.450"/><path d="M1013.6 69.6l0.700-2.400 1.700 1.700z" fill="#d8d8d8"/><path d="M1014.9 66.6l6.800-6.800q0.900-0.700 1.700 0.100t0.100 1.700l-6.800 6.800z" fill="#d8d8d8"/>
<path d="M1060 69.700H1052.700V76.700M1050 76.700H1068" fill="none" stroke="#cfcfcf" stroke-width="1.200"/><path d="M1052.700 64V80.400M1062.300 68V80.400M1060 69.700H1068" fill="none" stroke="#cfcfcf" stroke-width="0.700" opacity="0.500"/><path d="M1059.2 69.6l0.700-2.400 1.700 1.700z" fill="#cfcfcf"/><path d="M1060.5 66.6l6.800-6.800q0.900-0.700 1.700 0.100t0.100 1.700l-6.800 6.800z" fill="#cfcfcf"/>
<rect x="1106.4" y="58.6" width="13.4" height="21" rx="1.6" fill="none" stroke="#c9c9c9" stroke-width="1.2"/><rect x="1106.4" y="76" width="13.4" height="3.6" fill="#c9c9c9"/>
<g fill="#c9c9c9"><rect x="1108.4" y="60.8" width="1.8" height="1.8"/><rect x="1111.2" y="60.8" width="1.8" height="1.8"/><rect x="1114.0" y="60.8" width="1.8" height="1.8"/><rect x="1116.8" y="60.8" width="1.8" height="1.8"/><rect x="1108.4" y="63.6" width="1.8" height="1.8"/><rect x="1111.2" y="63.6" width="1.8" height="1.8"/><rect x="1114.0" y="63.6" width="1.8" height="1.8"/><rect x="1108.4" y="66.4" width="1.8" height="1.8"/><rect x="1111.2" y="66.4" width="1.8" height="1.8"/><rect x="1108.4" y="69.2" width="1.8" height="1.8"/><rect x="1114.0" y="66.4" width="1.8" height="1.8"/></g>
<path d="M1166.8 61.2a7.6 7.2 0 1 1-4.2 13.4l-3.2 2.2 1-3.6a7.6 7.2 0 0 1 6.4-12z" fill="none" stroke="#c9c9c9" stroke-width="1.2"/><path d="M1171.8 63.5l4.2-3.8M1172.2 59.4h4v4" fill="none" stroke="#c9c9c9" stroke-width="1.1"/><text x="1163.4" y="73.3" font-size="12" font-weight="bold" fill="#c9c9c9">?</text>
<path d="M1259.5 94.2l6 5.6 6-5.6" fill="none" stroke="#dcdcdc" stroke-width="1.4"/>
<path d="M399 123.200H1280" stroke="#dcdcdc" stroke-width="1.200"/>
<path d="M402.0 121.200V123M407.7 121.200V123M413.5 119V123M419.3 121.200V123M425.1 121.200V123M430.9 121.200V123M436.6 121.200V123M442.4 109.400V123M448.2 121.200V123M454.0 121.200V123M459.8 121.200V123M465.5 121.200V123M471.3 119V123M477.1 121.200V123M482.9 121.200V123M488.7 121.200V123M494.4 121.200V123M500.2 109.400V123M506.0 121.200V123M511.8 121.200V123M517.5 121.200V123M523.3 121.200V123M529.1 119V123M534.9 121.200V123M540.7 121.200V123M546.4 121.200V123M552.2 121.200V123M558.0 109.400V123M563.8 121.200V123M569.6 121.200V123M575.3 121.200V123M581.1 121.200V123M586.9 119V123M592.7 121.200V123M598.5 121.200V123M604.2 121.200V123M610.0 121.200V123M615.8 109.400V123M621.6 121.200V123M627.3 121.200V123M633.1 121.200V123M638.9 121.200V123M644.7 119V123M650.5 121.200V123M656.2 121.200V123M662.0 121.200V123M667.8 121.200V123M673.6 109.400V123M679.4 121.200V123M685.1 121.200V123M690.9 121.200V123M696.7 121.200V123M702.5 119V123M708.3 121.200V123M714.0 121.200V123M719.8 121.200V123M725.6 121.200V123M731.4 109.400V123M737.1 121.200V123M742.9 121.200V123M748.7 121.200V123M754.5 121.200V123M760.3 119V123M766.0 121.200V123M771.8 121.200V123M777.6 121.200V123M783.4 121.200V123M789.2 109.400V123M794.9 121.200V123M800.7 121.200V123M806.5 121.200V123M812.3 121.200V123M818.1 119V123M823.8 121.200V123M829.6 121.200V123M835.4 121.200V123M841.2 121.200V123M847.0 109.400V123M852.7 121.200V123M858.5 121.200V123M864.3 121.200V123M870.1 121.200V123M875.8 119V123M881.6 121.200V123M887.4 121.200V123M893.2 121.200V123M899.0 121.200V123M904.7 109.400V123M910.5 121.200V123M916.3 121.200V123M922.1 121.200V123M927.9 121.200V123M933.6 119V123M939.4 121.200V123M945.2 121.200V123M951.0 121.200V123M956.8 121.200V123M962.5 109.400V123M968.3 121.200V123M974.1 121.200V123M979.9 121.200V123M985.6 121.200V123M991.4 119V123M997.2 121.200V123M1003.0 121.200V123M1008.8 121.200V123M1014.5 121.200V123M1020.3 109.400V123M1026.1 121.200V123M1031.9 121.200V123M1037.7 121.200V123M1043.4 121.200V123M1049.2 119V123M1055.0 121.200V123M1060.8 121.200V123M1066.6 121.200V123M1072.3 121.200V123M1078.1 109.400V123M1083.9 121.200V123M1089.7 121.200V123M1095.4 121.200V123M1101.2 121.200V123M1107.0 119V123M1112.8 121.200V123M1118.6 121.200V123M1124.3 121.200V123M1130.1 121.200V123M1135.9 109.400V123M1141.7 121.200V123M1147.5 121.200V123M1153.2 121.200V123M1159.0 121.200V123M1164.8 119V123M1170.6 121.200V123M1176.4 121.200V123M1182.1 121.200V123M1187.9 121.200V123M1193.7 109.400V123M1199.5 121.200V123M1205.2 121.200V123M1211.0 121.200V123M1216.8 121.200V123M1222.6 119V123M1228.4 121.200V123M1234.1 121.200V123M1239.9 121.200V123M1245.7 121.200V123M1251.5 109.400V123M1257.3 121.200V123M1263.0 121.200V123M1268.8 121.200V123M1274.6 121.200V123M1279.200 108.400V124" stroke="#dcdcdc" stroke-width="1" fill="none"/>
<g font-size="8.600" fill="#d2d2d2" letter-spacing="0.300"><text x="444.3" y="118.400">40</text><text x="502.1" y="118.400">20</text><text x="559.9" y="118.400">0</text><text x="617.7" y="118.400">20</text><text x="675.5" y="118.400">40</text><text x="733.3" y="118.400">60</text><text x="791.1" y="118.400">80</text><text x="848.9" y="118.400">100</text><text x="906.6" y="118.400">120</text><text x="964.4" y="118.400">140</text><text x="1022.2" y="118.400">160</text><text x="1080.0" y="118.400">180</text><text x="1137.8" y="118.400">200</text><text x="1195.6" y="118.400">220</text><text x="1253.4" y="118.400">240</text></g>
</svg>
<div id="canvas" class="abs"></div>
<svg id="pagesvg" width="1280" height="889" viewBox="0 0 1280 889">
<defs><linearGradient id="cvg" x1="0" x2="1"><stop offset="0" stop-color="#272727"/><stop offset="0.800" stop-color="#292929"/><stop offset="1" stop-color="#2d2d2d"/></linearGradient></defs><rect x="399" y="124" width="7" height="765" fill="url(#cvg)"/>
<rect x="557.6" y="134" width="526.2" height="742.8" fill="#fff"/>
<g fill="none">
<rect x="598.4" y="194" width="445.1" height="623.8" stroke="#b4b3dc" stroke-width="1.2"/>
<rect x="606.9" y="202.5" width="427.8" height="606.9" stroke="#b6b6cc" stroke-width="1.2"/>
<path d="M640 766V246.3H1001.3V766" stroke="#c6c6d6" stroke-width="1.4"/>
</g>
<g fill="none" stroke="#8a88d2" stroke-width="1">
<path d="M606.9 176V194M606.9 818V835.5"/>
<path d="M1034.7 176V194M1034.7 818V835.5"/>
<path d="M589 202.5H598.4M1043.5 202.5H1052.5"/>
<path d="M589 809.4H598.4M1043.5 809.4H1052.5"/>
<path d="M821.4 176V194M802.8 185.5H838.4"/>
<path d="M821.4 818V835.5"/>
<path d="M589.5 489V524.5M580 507H598.4"/>
<path d="M1052.3 489V524.5M1043.5 507H1061.5"/>
</g>
<g fill="none" stroke="#111" stroke-width="1.8">
<path d="M1001.3 134V547.8H557.6"/>
<path d="M557.6 572.8H1001.3V765.9H557.6"/>
</g>
<g fill="#111" font-weight="bold">
<text x="624" y="288.5" font-size="12" letter-spacing="1" font-weight="500" stroke="#111" stroke-width="0.15">iPadで漫画を描こう！</text>
<text x="815.3" y="616" font-size="12" letter-spacing="0.95">クリスタと相棒アプリで</text>
<text x="813.4" y="632.6" font-size="12" letter-spacing="0.95"><tspan letter-spacing="0.2">iPad</tspan>漫画を極める！</text>
<text x="742.8" y="666" font-size="12" letter-spacing="0.95">効率作業のコツ</text>
<text x="995.5" y="789" font-size="10" font-weight="normal">1</text>
<text x="607.5" y="825.800" font-size="5.6" letter-spacing="0.400">iPadで漫画を描こう！</text>
<text x="804.5" y="825.800" font-size="5.6" letter-spacing="0.600">斎藤まゆり</text>
</g>
<path d="M803 827.5H838.5" stroke="#8a88d2" stroke-width="0.8" fill="none"/>
</svg>
<svg id="annot" width="1280" height="889" viewBox="0 0 1280 889">
<defs><clipPath id="c1"><path d="M250 440H294.100V540H284.300V524H250z"/></clipPath></defs>
<g fill="#c5007b"><circle cx="107" cy="455.7" r="4.1"/><circle cx="111.8" cy="467.7" r="4.1"/><circle cx="117.5" cy="479.4" r="4.1"/><circle cx="124.7" cy="490.4" r="4.1"/><circle cx="132.6" cy="502" r="4.1"/><circle cx="141.7" cy="512.4" r="4.1"/><circle cx="151.8" cy="521.3" r="4.1"/><circle cx="163.1" cy="528.2" r="4.1"/><circle cx="175.7" cy="532.9" r="4.1"/><circle cx="189" cy="535.4" r="4.1"/><circle cx="202.8" cy="535.4" r="4.1"/><circle cx="216" cy="533.5" r="4.1"/><circle cx="229.3" cy="530" r="4.1"/><circle cx="241" cy="525" r="4.1"/><circle cx="178.9" cy="185.2" r="4.1"/><circle cx="186.5" cy="196.9" r="4.1"/><circle cx="194.3" cy="207.9" r="4.1"/><circle cx="203.1" cy="218" r="4.1"/><circle cx="213.2" cy="227.4" r="4.1"/><circle cx="223.6" cy="235.6" r="4.1"/><circle cx="235.3" cy="243.1" r="4.1"/><circle cx="247.2" cy="249.4" r="4.1"/><circle cx="259.8" cy="253.9" r="4.1"/><circle cx="273.4" cy="257.3" r="4.1"/><circle cx="286" cy="258.9" r="4.1"/></g>
<ellipse cx="103.5" cy="414.5" rx="35" ry="33.3" fill="none" stroke="#c5007b" stroke-width="8.6"/>
<ellipse cx="167.4" cy="138.5" rx="35" ry="33.3" fill="none" stroke="#c5007b" stroke-width="8.6"/>
<circle cx="343" cy="281" r="52.7" fill="#fff" stroke="#c5007b" stroke-width="7"/>
<circle cx="289" cy="496" r="52.5" fill="#fff" stroke="#c5007b" stroke-width="7"/>
<text id="n2" x="343.6" y="318.3" font-size="99" text-anchor="middle" fill="#000" style="font-family:'Noto Sans CJK JP','Liberation Sans',sans-serif">2</text>
<text id="n1" x="287.2" y="534.4" font-size="101.7" clip-path="url(#c1)" text-anchor="middle" fill="#000" style="font-family:'Noto Sans CJK JP','Liberation Sans',sans-serif">1</text>
</svg>

</body>
</html>
